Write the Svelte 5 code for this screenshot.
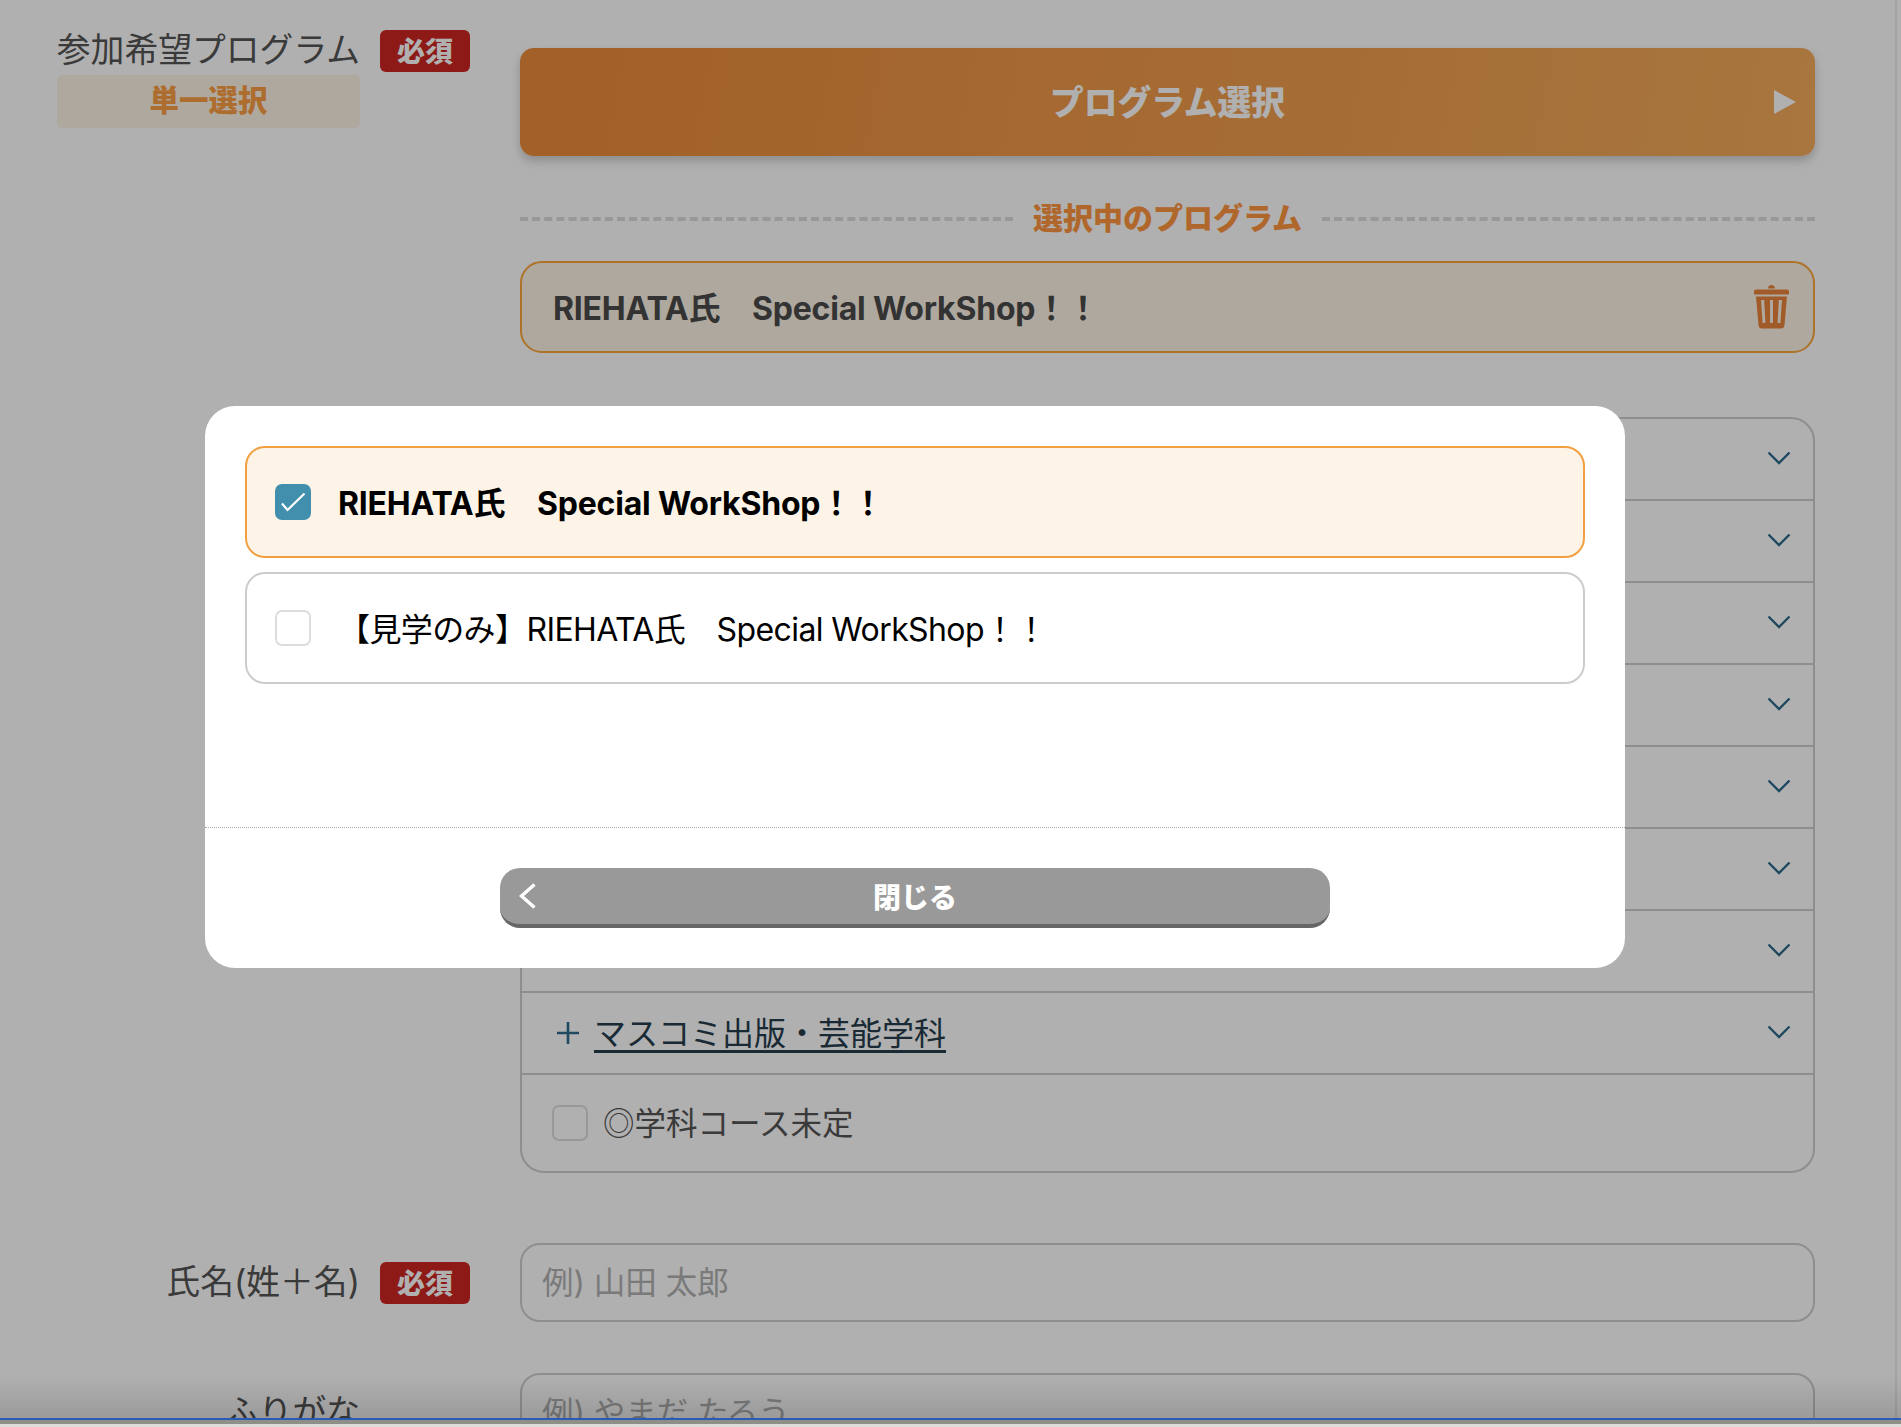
<script>
  // only the last accordion row can be read, the others sit behind the modal
  const departments = ['', '', '', '', '', '', '', 'マスコミ出版・芸能学科'];
  const programs = [
    { name: 'RIEHATA氏　Special WorkShop！！', checked: true },
    { name: '【見学のみ】RIEHATA氏　Special WorkShop！！', checked: false }
  ];
</script>

<div class="page">
  <form class="form">
    <div class="row first">
      <div class="label-col">
        <div class="label-stack">
          <span class="label">参加希望プログラム</span>
          <span class="chip">単一選択</span>
        </div>
        <span class="badge">必須</span>
      </div>
      <div class="field-col">
        <button type="button" class="select-btn">
          <span></span>
          <span class="select-text">プログラム選択</span>
          <svg class="select-arrow" viewBox="0 0 22 24" width="22" height="24"><path d="M0 0L22 12L0 24Z" fill="#fff" /></svg>
        </button>

        <div class="selected-title">
          <span class="dash"></span>
          <span class="selected-label">選択中のプログラム</span>
          <span class="dash"></span>
        </div>

        <div class="selected-item">
          <span class="selected-name">RIEHATA氏　Special WorkShop！！</span>
          <svg viewBox="0 0 35 44" width="35" height="44">
            <path fill="#e8853a" fill-rule="evenodd" d="M14 3.5C14 1.5 15.5 0 17.5 0S21 1.5 21 3.5ZM2 4.5H33C34.5 4.5 35 5.5 35 7V9.5H0V7C0 5.5 .5 4.5 2 4.5ZM2 11.5H33L30.5 40C30.3 42.5 29 43.5 27 43.5H8C6 43.5 4.7 42.5 4.5 40ZM7 15L8.6 38H11.4L10.2 15ZM16 15V38H19V15ZM24.8 15L23.6 38H26.4L28 15Z" />
          </svg>
        </div>

        <div class="accordion">
          {#each departments as name}
            <div class="acc-row">
              {#if name}
                <svg class="plus" viewBox="0 0 24 24" width="24" height="24"><path d="M12 1V23M1 12H23" stroke="#2d6b8b" stroke-width="2.6" fill="none" /></svg>
                <span class="acc-name">{name}</span>
              {/if}
              <svg class="chevron" viewBox="0 0 24 14" width="24" height="14"><path d="M1.5 1.5L12 12L22.5 1.5" stroke="#2d6b8b" stroke-width="2.4" fill="none" /></svg>
            </div>
          {/each}
          <div class="acc-row last">
            <span class="box"></span>
            <span class="undecided">◎学科コース未定</span>
          </div>
        </div>
      </div>
    </div>

    <div class="row name-row">
      <div class="label-col center">
        <span class="label">氏名(姓＋名)</span>
        <span class="badge">必須</span>
      </div>
      <div class="field-col">
        <input class="text-input" placeholder="例) 山田 太郎" />
      </div>
    </div>

    <div class="row kana-row">
      <div class="label-col center">
        <span class="label">ふりがな</span>
        <span class="badge hidden-badge"></span>
      </div>
      <div class="field-col">
        <input class="text-input" placeholder="例) やまだ たろう" />
      </div>
    </div>
  </form>

  <div class="overlay">
    <div class="modal">
      <div class="options">
        {#each programs as program}
          <div class="option" class:checked={program.checked}>
            <span class="box" class:on={program.checked}>
              {#if program.checked}
                <svg viewBox="0 0 36 36" width="36" height="36"><path d="M7 19.5L12.5 26L29.5 9.5" stroke="#fff" stroke-width="2.2" fill="none" /></svg>
              {/if}
            </span>
            <span class="option-name">{program.name}</span>
          </div>
        {/each}
      </div>
      <div class="modal-foot">
        <button type="button" class="close-btn">
          <svg viewBox="0 0 17 26" width="17" height="26"><path d="M15.5 1.5L2.5 13L15.5 24.5" stroke="#fff" stroke-width="3.4" fill="none" /></svg>
          <span>閉じる</span>
          <span></span>
        </button>
      </div>
    </div>
  </div>

  <div class="bottom-fade"></div>
  <div class="scroll-line"></div>
  <div class="window-edge"></div>
</div>

<style>
  :global(body) {
    margin: 0;
    background: #fff;
  }

  .page {
    position: relative;
    width: 1901px;
    height: 1427px;
    overflow: hidden;
    background: #fff;
    font-family: Inter, "Noto Sans CJK JP", sans-serif;
    color: #555;
  }

  .form {
    padding: 30px 86px 0 56px;
  }

  .row {
    display: grid;
    grid-template-columns: 414px 1295px;
    column-gap: 50px;
  }

  .name-row {
    margin-top: 70px;
  }

  .kana-row {
    margin-top: 51px;
  }

  .label-col {
    display: flex;
    justify-content: flex-end;
    align-items: flex-start;
    gap: 20px;
  }

  .label-col.center {
    align-items: center;
  }

  .label-stack {
    display: flex;
    flex-direction: column;
    gap: 3px;
  }

  .label {
    font-size: 33.8px;
    line-height: 40px;
    padding-bottom: 2px;
    white-space: nowrap;
  }

  .chip {
    height: 53px;
    line-height: 51px;
    text-align: center;
    border-radius: 5px;
    background: #fdf4e6;
    color: #fb9f44;
    font-size: 29.5px;
    font-weight: 900;
  }

  .badge {
    width: 90px;
    height: 42px;
    border-radius: 6px;
    background: #cc2620;
    color: #fff;
    font-size: 28px;
    line-height: 44px;
    font-weight: 900;
    text-align: center;
    flex: none;
  }

  .hidden-badge {
    visibility: hidden;
  }

  .field-col {
    min-width: 0;
  }

  .first .field-col {
    padding-top: 18px;
  }

  .select-btn {
    display: grid;
    grid-template-columns: 1fr auto 1fr;
    align-items: center;
    width: 100%;
    height: 108px;
    padding: 0 19px;
    border: 0;
    border-radius: 14px;
    background: linear-gradient(100deg, #ec8b3a, #f3ab5b);
    box-shadow: 0 5px 10px rgba(0, 0, 0, 0.2);
    color: #fff;
    font-family: inherit;
    font-size: 33.7px;
    font-weight: 900;
  }

  .select-text {
    margin-bottom: 4px;
  }

  .select-arrow {
    justify-self: end;
  }

  .selected-title {
    display: flex;
    align-items: center;
    gap: 20px;
    height: 54px;
    margin-top: 36px;
  }

  .dash {
    flex: 1;
    border-top: 4px dashed #dcdcdc;
  }

  .selected-label {
    margin-bottom: 7px;
    color: #ff9540;
    font-size: 30px;
    font-weight: 900;
  }

  .selected-item {
    display: flex;
    align-items: center;
    justify-content: space-between;
    box-sizing: border-box;
    height: 92px;
    margin-top: 15px;
    padding: 0 24px 0 31px;
    border: 2px solid #fda53a;
    border-radius: 22px;
    background: #fdf4e6;
    color: #4a4a4a;
    font-size: 32px;
    font-weight: 700;
    letter-spacing: -0.2px;
  }

  .selected-name {
    margin-bottom: 3px;
  }

  .accordion {
    box-sizing: border-box;
    height: 756px;
    margin-top: 64px;
    border: 2px solid #cecece;
    border-radius: 24px;
  }

  .acc-row {
    display: flex;
    align-items: center;
    box-sizing: border-box;
    height: 82px;
    padding: 0 22px 0 34px;
    border-bottom: 2px solid #cecece;
  }

  .acc-row.last {
    height: 96px;
    padding-left: 30px;
    border-bottom: 0;
  }

  .chevron {
    margin-left: auto;
    margin-bottom: 3px;
  }

  .plus {
    margin-right: 14px;
  }

  .acc-name {
    margin-bottom: 5px;
    color: #263d4d;
    font-size: 32px;
    text-decoration: underline;
    text-underline-offset: 5px;
  }

  .box {
    display: block;
    box-sizing: border-box;
    flex: none;
    width: 36px;
    height: 36px;
    border: 2px solid #ddd;
    border-radius: 7px;
    background: #fff;
  }

  .box.on {
    border: 0;
    background: #418fac;
  }

  .box svg {
    display: block;
  }

  .undecided {
    margin-left: 15px;
    margin-bottom: 5px;
    font-size: 31.5px;
  }

  .text-input {
    display: block;
    box-sizing: border-box;
    width: 100%;
    height: 79px;
    padding: 0 20px;
    border: 2px solid #cecece;
    border-radius: 20px;
    background: #fff;
    font-family: inherit;
    font-size: 31.5px;
  }

  .text-input::placeholder {
    color: #b1b1b1;
    opacity: 1;
  }

  .overlay {
    position: absolute;
    inset: 0;
    box-sizing: border-box;
    padding: 406px 276px 0 205px;
    background: rgba(0, 0, 0, 0.31);
  }

  .modal {
    display: flex;
    flex-direction: column;
    height: 562px;
    border-radius: 30px;
    background: #fff;
    color: #000;
  }

  .options {
    display: flex;
    flex-direction: column;
    gap: 14px;
    height: 421px;
    box-sizing: border-box;
    padding: 40px 40px 0;
  }

  .option {
    display: flex;
    align-items: center;
    gap: 27px;
    box-sizing: border-box;
    height: 112px;
    padding: 0 28px;
    border: 2px solid #ccc;
    border-radius: 20px;
    font-size: 32px;
    letter-spacing: -0.6px;
  }

  .option.checked {
    border-color: #f0a040;
    background: #fdf4e7;
    font-weight: 700;
    letter-spacing: -0.2px;
  }

  .option-name {
    margin-bottom: 2px;
  }

  .modal-foot {
    padding: 40px 295px 0;
    border-top: 1px dotted #aaa;
  }

  .close-btn {
    display: grid;
    grid-template-columns: 1fr auto 1fr;
    align-items: center;
    box-sizing: border-box;
    width: 100%;
    height: 60px;
    padding: 0 19px;
    border: 0;
    border-bottom: 4px solid #666;
    border-radius: 20px;
    background: #999;
    color: #fff;
    font-family: inherit;
    font-size: 28px;
    font-weight: 900;
  }

  .bottom-fade {
    position: absolute;
    left: 0;
    right: 0;
    top: 1375px;
    height: 43px;
    background: linear-gradient(rgba(0, 0, 0, 0), rgba(0, 0, 0, 0.12));
  }

  .scroll-line {
    position: absolute;
    top: 0;
    right: 4px;
    width: 2px;
    height: 1418px;
    background: rgba(0, 0, 0, 0.07);
  }

  .window-edge {
    position: absolute;
    left: 0;
    right: 0;
    top: 1418px;
    height: 9px;
    box-sizing: border-box;
    border-top: 2px solid #2a5cb5;
    background: linear-gradient(#8f8f8a 0 4px, #dddcd8 4px);
  }
</style>
